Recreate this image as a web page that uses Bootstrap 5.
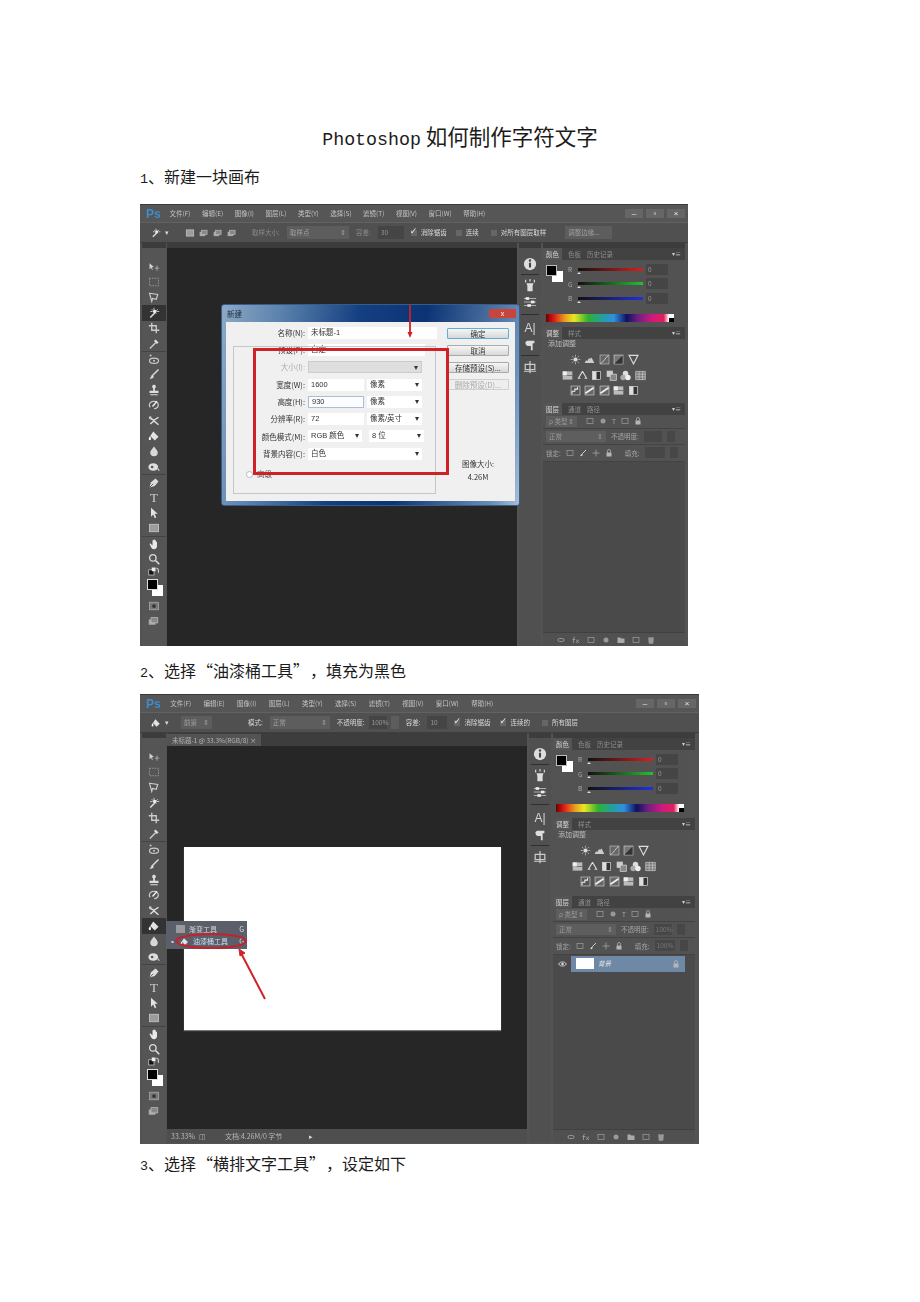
<!DOCTYPE html>
<html lang="zh-CN">
<head>
    <meta charset="UTF-8">
    <meta name="viewport" content="width=device-width, initial-scale=1">
    <title>Photoshop 如何制作字符文字</title>
    <link href="https://cdn.jsdelivr.net/npm/bootstrap@5.3.0/dist/css/bootstrap.min.css" rel="stylesheet">
    <style>
        body {
            background: #fff;
            color: #1c1c1c;
            font-family: "Noto Sans CJK SC", sans-serif;
            height: 1302px;
            overflow: hidden;
        }
        .doc-title { font-size: 21.5px; line-height: 30px; padding-top: 121px; margin: 0 0 9px; font-weight: 400; }
        .doc-title .lat { font-family: "Liberation Mono", monospace; font-size: 18.3px; }
        .step { font-size: 16px; line-height: 24px; padding-left: 140px; margin: 0; }
        .step .lat { font-family: "Liberation Mono", monospace; font-size: 13.4px; }
        .q-o, .q-c { display: inline-block; width: 1.06em; }
        .q-o { text-align: right; }
        .shot-wrap { padding-left: 140px; }
        .gap-a { margin-bottom: 12px; }
        .gap-b { margin-bottom: 8px; }
        .gap-c { margin-bottom: 12px; }
        .gap-d { margin-bottom: 7px; }

        /* Photoshop windows */
        .ps { background: #535353; color: #c4c4c4; font-size: 6.5px; line-height: 1; filter: blur(.55px); border-top: 1px solid #3a3a3a; white-space: nowrap; }
        .win-a { width: 548px; height: 442px; }
        .win-b { width: 559px; height: 450px; }
        .ps svg { display: block; flex: none; }
        .ps-menu { height: 17px; background: #565656; padding-left: 6px; gap: 11.5px; }
        .win-b .ps-menu { gap: 12.3px; }
        .ps-logo { font-size: 12px; font-weight: 700; color: #3d8ccb; width: 14px; margin-right: -2px; font-family: "Liberation Sans", sans-serif; }
        .ps-ctl { gap: 3px; margin-right: 3px; }
        .ps-ctl span { width: 18px; height: 9px; background: #666; color: #eee; font-size: 8px; line-height: 9px; text-align: center; font-family: "Liberation Sans", sans-serif; }
        .ps-opts { height: 21px; background: #505050; border-top: 1px solid #626262; border-bottom: 1px solid #3e3e3e; }
        .ps-body { height: 404px; padding: 0 3px 1px 2px; }
        .win-b .ps-body { height: 411px; padding-right: 4px; }

        .ps-tools { width: 24px; flex: none; margin-right: 1px; background: #555; padding-top: 11px; border-top: 5px solid #3c3c3c; }
        .tool { height: 15.4px; }
        .tool svg { width: 12px; height: 12px; }
        .tool.on { background: #333; }
        .tool.t-sep { border-top: 1px solid #444; }
        .tool.t-mini { height: 11px; }
        .tool.t-gap { margin-top: 2px; }
        .tool-t { font-family: "Liberation Serif", serif; font-size: 13px; color: #d0d0d0; }
        .chips { height: 18px; position: relative; }
        .chip-fg, .chip-bg { position: absolute; width: 11px; height: 11px; }
        .chip-fg { left: 5px; top: 1px; background: #000; border: 1px solid #ddd; z-index: 1; }
        .chip-bg { left: 10px; top: 7px; background: #fff; }

        .ps-canvas { background: #262626; position: relative; border-top: 5px solid #3c3c3c; }
        .win-b .ps-canvas { border-top-width: 1px; }
        .ps-gutter { width: 2px; }
        .ps-dock { width: 22px; flex: none; background: #505050; border-top: 5px solid #3c3c3c; padding-top: 7px; }
        .ps-dock hr { border-color: #2f2f2f; opacity: 1; }
        .hr-a { margin: 1.5px 2px; }
        .hr-b { margin: 4px 2px; }
        .hr-c { margin: 2px 2px; }
        .dock-i { height: 17px; }
        .dock-i svg { width: 14px; height: 14px; }
        .dock-a { font-family: "Liberation Sans", sans-serif; font-size: 12px; color: #d4d4d4; }

        .ps-panels { width: 142px; flex: none; margin-left: 2px; background: #525252; border-top: 5px solid #3c3c3c; }
        .p-tabs { height: 12px; background: #424242; gap: 6px; color: #8d8d8d; padding-right: 4px; }
        .p-tabs b { font-weight: 400; background: #555; color: #d6d6d6; padding: 3px 3px; height: 12px; }
        .p-menu { color: #ccc; font-size: 6px; }
        .p-color { height: 67px; padding: 2px 5px 0 2px; position: relative; }
        .win-b .p-color { height: 68px; }
        .swatch { position: absolute; left: 3px; top: 5px; width: 17px; height: 17px; }
        .swatch i { position: absolute; display: block; width: 11px; height: 11px; }
        .swatch .fg { left: 0; top: 0; background: #000; border: 1px solid #bbb; z-index: 1; }
        .swatch .bg { left: 6px; top: 6px; background: #fff; }
        .slider-row { height: 14.5px; padding-left: 23px; gap: 3px; }
        .slider-row > span { width: 7px; color: #aaa; }
        .slider { width: 65px; height: 3px; position: relative; }
        .slider::after { content: ""; position: absolute; left: -1px; top: 4px; border: 2px solid transparent; border-bottom-color: #ddd; border-top: 0; }
        .s-r { background: linear-gradient(90deg, #111, #d82020); }
        .s-g { background: linear-gradient(90deg, #111, #22c030); }
        .s-b { background: linear-gradient(90deg, #111, #2030e0); }
        .val { width: 22px; height: 11px; background: #454545; color: #999; padding: 2px; line-height: 7px; }
        .ramp { height: 8px; width: 128px; margin: 8px 0 0 1px; background: linear-gradient(90deg, #6b0000, #d81818 6%, #e8a020 15%, #e8e820 22%, #30b030 33%, #20a0a0 44%, #3090e0 53%, #101060 63%, #702080 72%, #d01880 83%, #e02060 92%, #fff 96%, #fff); position: relative; }
        .ramp::after { content: ""; position: absolute; right: 0; bottom: 0; width: 5px; height: 4px; background: #000; }
        .p-adj { height: 64px; padding: 0 0 0 3px; }
        .win-b .p-adj { height: 66px; }
        .p-adj .adj-t { color: #bdbdbd; padding: 1px 2px; margin-bottom: 4px; font-size: 7px; }
        .adj-row { height: 15.5px; gap: 3.5px; padding-right: 23px; }
        .adj-row svg { width: 11px; height: 11px; }
        .lay-row { height: 16.5px; padding: 0 3px; gap: 5px; border-bottom: 1px solid #434343; color: #a5a5a5; }
        .lay-row.first { height: 13.5px; }
        .lay-row svg { width: 8px; height: 8px; }
        .pick { background: #5e5e5e; height: 11px; padding: 2px 3px; line-height: 7px; display: flex; justify-content: space-between; color: #999; }
        .box { background: #474747; height: 11px; color: #777; line-height: 7px; padding: 2px; }
        .lay-list { background: #4a4a4a; position: relative; padding: 1px 10px 0 0; }
        .layer { height: 16px; padding: 0 5px; background: #6e88a5; color: #e8e8e8; margin-left: 18px; gap: 4px; font-style: italic; }
        .layer-wrap { position: relative; }
        .eye { position: absolute; left: 5px; top: 4px; width: 9px; height: 8px; }
        .thumb { width: 18px; height: 11px; background: #fff; }
        .lay-foot { height: 14px; gap: 7px; padding-right: 30px; background: #505050; border-top: 1px solid #404040; }
        .lay-foot svg { width: 8px; height: 8px; }

        .o-main { color: #d8d8d8; }
        .o-muted { color: #8b8b8b; }
        .o-field { background: #5d5d5d; height: 13px; line-height: 9px; padding: 2px 3px; color: #a0a0a0; display: flex; justify-content: space-between; }
        .o-dark { background: #454545; height: 13px; line-height: 9px; padding: 2px 3px; color: #999; }
        .check { width: 6px; height: 6px; background: #666; position: relative; flex: none; }
        .check.yes::after { content: "✓"; position: absolute; left: -1px; top: -3px; font-size: 9px; color: #eee; font-family: "DejaVu Sans", sans-serif; }
        .w-8 { width: 8px; } .w-18 { width: 18px; } .w-20 { width: 20px; } .w-26 { width: 26px; } .w-31 { width: 31px; }
        .w-47 { width: 47px; } .w-60 { width: 60px; } .w-62 { width: 62px; }
        .ml-0 { margin-left: 11px; } .ml-1 { margin-left: 4px; } .ml-2 { margin-left: 7px; } .ml-3 { margin-left: 12px; } .ml-4 { margin-left: 19px; } .ml-5 { margin-left: 27px; }
        .ml-6 { margin-left: 36px; } .ml-7 { margin-left: 10px; } .ml-8 { margin-left: 16px; } .ml-9 { margin-left: 15px; } .ml-10 { margin-left: 9px; }
        .o-ic { width: 10px; height: 10px; }

        /* dialog in first window */
        .dlg { position: absolute; left: 54px; top: 56px; width: 299px; height: 202px; background: linear-gradient(100deg, #8da9c6 0, #5b82ad 18%, #143f80 42%, #0c3474 62%, #6b8fb6 92%, #a8bed4); border: 1px solid #355d8c; border-radius: 3px; color: #333; font-size: 7.5px; }
        .dlg-title { height: 17px; padding: 0 3px 0 5px; color: #1d2a3a; }
        .dlg-x { width: 27px; height: 9px; background: #c9443c; color: #fff; text-align: center; line-height: 9px; font-size: 7px; font-family: "Liberation Sans", sans-serif; }
        .dlg-body { margin: 0 4px; height: 179px; background: #f0f0f0; padding-top: 2px; gap: 13px; position: relative; }
        .dlg-form { width: 208px; }
        .dlg-row { height: 17.3px; gap: 3px; }
        .dlg-row > label { width: 79px; text-align: right; flex: none; }
        .fld { height: 12px; background: #fff; padding: 0 3px; line-height: 12px; display: flex; justify-content: space-between; flex: none; font-family: "Liberation Sans", "Noto Sans CJK SC", sans-serif; }
        .fld.off { background: #dedede; border: 1px solid #ccc; }
        .fld.cur { border: 1px solid #a9bfd8; background: #fbfdff; line-height: 10px; }
        .f-129 { width: 129px; } .f-117 { width: 117px; } .f-114 { width: 114px; } .f-56 { width: 56px; } .f-55 { width: 55px; }
        .f-54 { width: 54px; }
        .muted-l { color: #aaa; }
        .dlg-more { margin: 8px 0 0 20px; gap: 4px; color: #555; }
        .dlg-more i { width: 7px; height: 7px; border-radius: 50%; background: #fff; border: 1px solid #bbb; display: block; }
        .dlg-side { padding-top: 4px; width: 62px; }
        .dlg-btn { height: 11px; line-height: 10px; margin-bottom: 6px; background: linear-gradient(#f6f6f6, #d8d8d8); border: 1px solid #aaa; border-radius: 1px; text-align: center; }
        .dlg-btn.def { border-color: #5fb0d8; }
        .dlg-btn.off { color: #aaa; border-color: #d0d0d0; background: #eee; }
        .dlg-size { margin-top: 67px; line-height: 13px; text-align: center; }
        .dlg-group { position: absolute; left: 7px; top: 24px; width: 203px; height: 148px; border: 1px solid #c6c6c6; pointer-events: none; }
        .red-box { position: absolute; left: 31px; top: 43px; width: 196px; height: 127px; border: 3px solid #cf2127; }
        .red-line { position: absolute; left: 183px; top: 0; width: 10px; height: 34px; }

        /* second window canvas */
        .ps-tabbar { height: 12px; background: #3d3d3d; }
        .ps-tab { background: #535353; height: 12px; padding: 3px 5px; color: #b5b5b5; }
        .ps-paper { width: 317px; height: 183px; background: #fff; margin: 101px 0 0 17px; box-shadow: 0 1px 1px #777; }
        .ps-status { height: 14px; background: #4e4e4e; padding: 0 4px; color: #b8b8b8; font-size: 7px; position: absolute; left: 0; right: 0; bottom: 0; }
        .flyout { position: absolute; left: -1px; top: 187px; width: 81px; height: 28px; background: #5a5f6a; color: #dcdcdc; padding: 2px 3px; z-index: 2; font-size: 7px; }
        .fly-row { height: 12px; gap: 4px; }
        .fly-row.on { color: #cfe0f2; }
        .fly-row svg { width: 9px; height: 9px; }
        .fly-ic { width: 9px; height: 8px; background: #9a9a9a; }
        .fly-mark { position: absolute; left: 0; top: 0; width: 110px; height: 82px; z-index: 3; }
    </style>
</head>
<body>
<svg class="d-none" xmlns="http://www.w3.org/2000/svg">
    <symbol id="t-move" viewBox="0 0 16 16"><path d="M2 3l6 5-3 .4 1.4 3-1 .5L4 9l-2 2z" fill="#d0d0d0"/><path d="M12 6v7M9 9.5h6" stroke="#bbb" fill="none"/></symbol>
    <symbol id="t-marq" viewBox="0 0 16 16"><rect x="2" y="3" width="12" height="10" fill="none" stroke="#aaa" stroke-dasharray="2 1.5"/></symbol>
    <symbol id="t-lasso" viewBox="0 0 16 16"><path d="M2 3l11 1.500-2 6.500-5-1-1 4z" fill="none" stroke="#ccc" stroke-width="1.500"/></symbol>
    <symbol id="t-wand" viewBox="0 0 16 16"><path d="M9 8l-6 6" stroke="#ddd" stroke-width="2.200"/><path d="M8 1v3M3 6h3M12 6h3M5 3l2 2M13 3l-2 2M11 9l-1-1" stroke="#eee"/><circle cx="9" cy="6" r="2.400" fill="#eee"/></symbol>
    <symbol id="t-crop" viewBox="0 0 16 16"><path d="M5 1v10h10M1 5h10v10" fill="none" stroke="#ccc" stroke-width="1.800"/></symbol>
    <symbol id="t-drop" viewBox="0 0 16 16"><path d="M2.500 14l8-8" stroke="#ccc" stroke-width="2"/><path d="M9 3l4 4" stroke="#ddd" stroke-width="3"/></symbol>
    <symbol id="t-heal" viewBox="0 0 16 16"><ellipse cx="8" cy="9" rx="6" ry="3.500" fill="none" stroke="#ccc" stroke-width="1.500"/><circle cx="8" cy="9" r="1.300" fill="#ccc"/><path d="M2 2h3M3.500 .5v3" stroke="#ccc"/></symbol>
    <symbol id="t-brush" viewBox="0 0 16 16"><path d="M14 2L7 9l-2 2" stroke="#ddd" stroke-width="1.800" fill="none"/><path d="M6 10c-2 0-2 3-4 4 3 1 6-1 5.500-3z" fill="#ddd"/></symbol>
    <symbol id="t-stamp" viewBox="0 0 16 16"><path d="M8 1a2.500 2.500 0 0 1 1.200 4.700V9H14v3H2V9h4.800V5.700A2.500 2.500 0 0 1 8 1zM3 13.500h10V15H3z" fill="#ddd"/></symbol>
    <symbol id="t-hist" viewBox="0 0 16 16"><path d="M3 11a6 5 0 1 1 5 2" fill="none" stroke="#ccc" stroke-width="1.600"/><path d="M12 3L6 10" stroke="#eee" stroke-width="1.800"/></symbol>
    <symbol id="t-erase" viewBox="0 0 16 16"><path d="M2 4l6 3 6-4M3 12l5-4 6 5" fill="none" stroke="#ddd" stroke-width="2"/><circle cx="3" cy="3.500" r="1.800" fill="#ccc"/></symbol>
    <symbol id="t-bucket" viewBox="0 0 16 16"><path d="M7 2l7 7-5 5-6-6z" fill="#e2e2e2"/><path d="M3 8c-1.500 2-2 3-2 4a1.500 1.500 0 0 0 3 0c0-1-.5-2-1-4z" fill="#fff"/></symbol>
    <symbol id="t-blur" viewBox="0 0 16 16"><path d="M8 2c3 4 5 6 5 8a5 5 0 0 1-10 0c0-2 2-4 5-8z" fill="#d8d8d8"/></symbol>
    <symbol id="t-dodge" viewBox="0 0 16 16"><ellipse cx="7" cy="8" rx="6.500" ry="5" fill="#ddd"/><circle cx="5.500" cy="8" r="1.800" fill="#555"/><path d="M13 10l2 3" stroke="#ddd" stroke-width="1.500"/></symbol>
    <symbol id="t-pen" viewBox="0 0 16 16"><path d="M2 14l2-7 6-5 4 4-5 6z" fill="#ddd"/><path d="M2 14l5-5" stroke="#444"/></symbol>
    <symbol id="t-path" viewBox="0 0 16 16"><path d="M4 1v12l3-3 2 5 2-1-2-5h4z" fill="#e2e2e2"/></symbol>
    <symbol id="t-rect" viewBox="0 0 16 16"><rect x="2" y="3" width="12" height="10" fill="#9c9c9c" stroke="#ccc"/></symbol>
    <symbol id="t-hand" viewBox="0 0 16 16"><path d="M3 7l3 3V3h1.500v4V2H9v5V3h1.500v5V5H12v6c0 2-1.500 4-4 4-2 0-3-1-4-3L2 8z" fill="#e8e8e8"/></symbol>
    <symbol id="t-zoom" viewBox="0 0 16 16"><circle cx="6.500" cy="6.500" r="4.300" fill="none" stroke="#ddd" stroke-width="1.800"/><path d="M10 10l5 5" stroke="#ddd" stroke-width="2.200"/></symbol>
    <symbol id="t-mini" viewBox="0 0 16 16"><rect x="1" y="5" width="7" height="7" fill="#111" stroke="#ccc"/><rect x="5" y="2" width="5" height="5" fill="#eee"/><path d="M11 3c3 0 3 2 3 6" fill="none" stroke="#ccc" stroke-width="1.500"/></symbol>
    <symbol id="t-mask" viewBox="0 0 16 16"><rect x="2" y="3" width="12" height="10" fill="#777" stroke="#aaa"/><circle cx="8" cy="8" r="2.500" fill="#333"/></symbol>
    <symbol id="t-screen" viewBox="0 0 16 16"><rect x="1" y="6" width="9" height="7" fill="#aaa"/><rect x="4" y="3.500" width="9" height="7" fill="#888" stroke="#bbb"/></symbol>
    <symbol id="d-info" viewBox="0 0 16 16"><circle cx="8" cy="8" r="7" fill="#ddd"/><path d="M8 6.500V12" stroke="#444" stroke-width="2.400"/><circle cx="8" cy="4" r="1.400" fill="#444"/></symbol>
    <symbol id="d-puppet" viewBox="0 0 16 16"><path d="M3 2v3M8 1v3M13 2v3" stroke="#ccc" stroke-width="1.500"/><path d="M4 6h8l-1 3v6H5V9z" fill="#ddd"/></symbol>
    <symbol id="d-sliders" viewBox="0 0 16 16"><path d="M1 4h14M1 8h14M1 12h14" stroke="#bbb"/><rect x="3" y="2.500" width="4" height="3" fill="#eee"/><rect x="9" y="6.500" width="4" height="3" fill="#eee"/><rect x="5" y="10.500" width="4" height="3" fill="#eee"/></symbol>
    <symbol id="d-para" viewBox="0 0 16 16"><path d="M5 3h8v3h-2v8H9V9H7a3 3 0 0 1-2-6z" fill="#ddd"/></symbol>
    <symbol id="d-align" viewBox="0 0 16 16"><path d="M8 1v14" stroke="#ccc" stroke-width="1.400"/><path d="M1 13h14" stroke="#ccc"/><rect x="2.500" y="5" width="11" height="6" fill="none" stroke="#ccc" stroke-width="1.400"/></symbol>
    <symbol id="a-sun" viewBox="0 0 16 16"><circle cx="8" cy="8" r="3" fill="#ddd"/><path d="M8 1v3M8 12v3M1 8h3M12 8h3M3 3l2 2M11 11l2 2M13 3l-2 2M5 11l-2 2" stroke="#ccc"/></symbol>
    <symbol id="a-hist" viewBox="0 0 16 16"><path d="M1 13l2-4 2 1 2-4 2 1 2-2 2 4 2 4z" fill="#ccc"/></symbol>
    <symbol id="a-curve" viewBox="0 0 16 16"><rect x="1.500" y="1.500" width="13" height="13" fill="#666" stroke="#bbb"/><path d="M2 14C7 12 9 5 14 2" stroke="#eee" fill="none"/></symbol>
    <symbol id="a-exp" viewBox="0 0 16 16"><rect x="1.500" y="1.500" width="13" height="13" fill="#777" stroke="#ccc"/><path d="M2 14L14 2v12z" fill="#333"/></symbol>
    <symbol id="a-tri" viewBox="0 0 16 16"><path d="M1.500 2h13L8 14.500z" fill="none" stroke="#ddd" stroke-width="1.600"/></symbol>
    <symbol id="a-hue" viewBox="0 0 16 16"><rect x="1" y="2" width="14" height="12" fill="#bbb"/><path d="M1 8h14" stroke="#555"/><rect x="1" y="2" width="6" height="6" fill="#eee"/></symbol>
    <symbol id="a-bal" viewBox="0 0 16 16"><path d="M8 2L2 12h3M8 2l6 10h-3" fill="none" stroke="#ddd" stroke-width="1.500"/></symbol>
    <symbol id="a-half" viewBox="0 0 16 16"><rect x="2" y="2" width="12" height="12" fill="#333" stroke="#ddd"/><rect x="2" y="2" width="6" height="12" fill="#ddd"/></symbol>
    <symbol id="a-photo" viewBox="0 0 16 16"><rect x="1" y="1" width="9" height="9" fill="#ccc"/><rect x="6" y="6" width="9" height="9" fill="#888" stroke="#ddd"/></symbol>
    <symbol id="a-mix" viewBox="0 0 16 16"><circle cx="8" cy="5" r="4" fill="#ddd"/><circle cx="4.500" cy="11" r="4" fill="#aaa"/><circle cx="11.500" cy="11" r="4" fill="#eee"/></symbol>
    <symbol id="a-grid" viewBox="0 0 16 16"><path d="M1 2h14v12H1zM6 2v12M11 2v12M1 6h14M1 10h14" fill="#777" stroke="#ccc"/></symbol>
    <symbol id="a-post" viewBox="0 0 16 16"><rect x="1.500" y="1.500" width="13" height="13" fill="#555" stroke="#ccc"/><path d="M3 13V9h4V6h4V3" fill="none" stroke="#eee" stroke-width="1.500"/></symbol>
    <symbol id="a-diag" viewBox="0 0 16 16"><rect x="1.500" y="1.500" width="13" height="13" fill="#666" stroke="#ccc"/><path d="M2 12L14 4" stroke="#eee" stroke-width="2.500"/></symbol>
    <symbol id="l-img" viewBox="0 0 16 16"><rect x="2" y="3" width="12" height="10" fill="none" stroke="#999" stroke-width="1.500"/></symbol>
    <symbol id="l-dot" viewBox="0 0 16 16"><circle cx="8" cy="8" r="5" fill="#999"/></symbol>
    <symbol id="l-lock" viewBox="0 0 16 16"><rect x="3" y="7" width="10" height="8" fill="#b5b5b5"/><path d="M5 7V4a3 3 0 0 1 6 0v3" fill="none" stroke="#b5b5b5" stroke-width="1.500"/></symbol>
    <symbol id="l-cross" viewBox="0 0 16 16"><path d="M8 1v14M1 8h14" stroke="#aaa" stroke-width="1.500"/></symbol>
    <symbol id="l-link" viewBox="0 0 16 16"><path d="M2 8a3 3 0 0 1 3-3h6a3 3 0 0 1 0 6H5a3 3 0 0 1-3-3z" fill="none" stroke="#aaa" stroke-width="1.500"/></symbol>
    <symbol id="l-fold" viewBox="0 0 16 16"><path d="M1 3h6l1 2h7v9H1z" fill="#aaa"/></symbol>
    <symbol id="l-bin" viewBox="0 0 16 16"><path d="M3 4h10l-1 11H4zM2 3h12" fill="#999" stroke="#999"/></symbol>
    <symbol id="l-fx" viewBox="0 0 16 16"><path d="M3 14V5a2 2 0 0 1 3-2M1 7h5M8 7l6 7M14 7l-6 7" fill="none" stroke="#aaa" stroke-width="1.500"/></symbol>
</svg>

<!-- shared parts of both Photoshop windows -->
<template id="tpl-menu">
    <span class="ps-logo">Ps</span>
    <span>文件(F)</span><span>编辑(E)</span><span>图像(I)</span><span>图层(L)</span><span>类型(Y)</span><span>选择(S)</span><span>滤镜(T)</span><span>视图(V)</span><span>窗口(W)</span><span>帮助(H)</span>
    <div class="ps-ctl d-flex ms-auto"><span>–</span><span>▫</span><span>×</span></div>
</template>
<template id="tpl-dock">
    <div class="dock-i d-flex justify-content-center align-items-center"><svg><use href="#d-info"/></svg></div>
    <hr class="hr-a">
    <div class="dock-i d-flex justify-content-center align-items-center"><svg><use href="#d-puppet"/></svg></div>
    <div class="dock-i d-flex justify-content-center align-items-center"><svg><use href="#d-sliders"/></svg></div>
    <hr class="hr-b">
    <div class="dock-i dock-a d-flex justify-content-center align-items-center">A|</div>
    <div class="dock-i d-flex justify-content-center align-items-center"><svg><use href="#d-para"/></svg></div>
    <hr class="hr-c">
    <div class="dock-i d-flex justify-content-center align-items-center"><svg><use href="#d-align"/></svg></div>
</template>
<template id="tpl-panels">
    <div class="p-tabs d-flex align-items-center"><b>颜色</b><span>色板</span><span>历史记录</span><span class="ms-auto p-menu">▾≡</span></div>
    <div class="p-color">
        <div class="swatch"><i class="fg"></i><i class="bg"></i></div>
        <div class="slider-row d-flex align-items-center"><span>R</span><div class="slider s-r"></div><div class="val">0</div></div>
        <div class="slider-row d-flex align-items-center"><span>G</span><div class="slider s-g"></div><div class="val">0</div></div>
        <div class="slider-row d-flex align-items-center"><span>B</span><div class="slider s-b"></div><div class="val">0</div></div>
        <div class="ramp"></div>
    </div>
    <div class="p-tabs d-flex align-items-center"><b>调整</b><span>样式</span><span class="ms-auto p-menu">▾≡</span></div>
    <div class="p-adj">
        <div class="adj-t">添加调整</div>
        <div class="adj-row d-flex justify-content-center align-items-center"><svg><use href="#a-sun"/></svg><svg><use href="#a-hist"/></svg><svg><use href="#a-curve"/></svg><svg><use href="#a-exp"/></svg><svg><use href="#a-tri"/></svg></div>
        <div class="adj-row d-flex justify-content-center align-items-center"><svg><use href="#a-hue"/></svg><svg><use href="#a-bal"/></svg><svg><use href="#a-half"/></svg><svg><use href="#a-photo"/></svg><svg><use href="#a-mix"/></svg><svg><use href="#a-grid"/></svg></div>
        <div class="adj-row d-flex justify-content-center align-items-center"><svg><use href="#a-post"/></svg><svg><use href="#a-diag"/></svg><svg><use href="#a-diag"/></svg><svg><use href="#a-hue"/></svg><svg><use href="#a-half"/></svg></div>
    </div>
    <div class="p-tabs d-flex align-items-center"><b>图层</b><span>通道</span><span>路径</span><span class="ms-auto p-menu">▾≡</span></div>
    <div class="lay-row first d-flex align-items-center"><span class="pick w-31"><span>ρ 类型</span><span>⇕</span></span><svg class="ml-1"><use href="#l-img"/></svg><svg><use href="#l-dot"/></svg><span>T</span><svg><use href="#l-img"/></svg><svg><use href="#l-lock"/></svg></div>
    <div class="lay-row d-flex align-items-center"><span class="pick w-60"><span>正常</span><span>⇕</span></span><span>不透明度:</span><span class="box w-18 pct"></span><span class="box w-8"></span></div>
    <div class="lay-row d-flex align-items-center"><span>锁定:</span><svg><use href="#l-img"/></svg><svg><use href="#t-brush"/></svg><svg><use href="#l-cross"/></svg><svg><use href="#l-lock"/></svg><span class="ml-2">填充:</span><span class="box w-20 pct"></span><span class="box w-8"></span></div>
    <div class="lay-list flex-grow-1"></div>
    <div class="lay-foot d-flex align-items-center justify-content-end"><svg><use href="#l-link"/></svg><svg><use href="#l-fx"/></svg><svg><use href="#l-img"/></svg><svg><use href="#l-dot"/></svg><svg><use href="#l-fold"/></svg><svg><use href="#l-img"/></svg><svg><use href="#l-bin"/></svg></div>
</template>

<h1 class="doc-title text-center"><span class="lat">Photoshop</span> 如何制作字符文字</h1>
<p class="step gap-a"><span class="lat">1</span>、新建一块画布</p>

<div class="shot-wrap gap-c">
<div class="ps win-a">
    <div class="ps-menu d-flex align-items-center"></div>
    <div class="ps-opts d-flex align-items-center">
        <svg class="o-ic ml-0"><use href="#t-wand"/></svg>
        <span class="ml-1 o-main">▾</span>
        <svg class="o-ic ml-8"><use href="#t-rect"/></svg>
        <svg class="o-ic ml-1"><use href="#t-screen"/></svg>
        <svg class="o-ic ml-1"><use href="#t-screen"/></svg>
        <svg class="o-ic ml-1"><use href="#t-screen"/></svg>
        <span class="ml-9 o-muted w-31">取样大小:</span>
        <span class="o-field w-62 ml-1"><span>取样点</span><span>⇕</span></span>
        <span class="ml-2 o-muted">容差:</span>
        <span class="o-dark w-26 ml-2">30</span>
        <span class="check yes ml-2"></span><span class="ml-1 o-main">消除锯齿</span>
        <span class="check ml-10"></span><span class="ml-1 o-main">连续</span>
        <span class="check ml-3"></span><span class="ml-1 o-main">对所有图层取样</span>
        <span class="o-field w-47 ml-4"><span>调整边缘...</span></span>
    </div>
    <div class="ps-body d-flex">
        <div class="ps-tools" data-on="wand"></div>
        <div class="ps-canvas flex-grow-1">
            <div class="dlg">
                <div class="dlg-title d-flex align-items-center justify-content-between"><span>新建</span><span class="dlg-x">x</span></div>
                <div class="dlg-body d-flex">
                    <div class="dlg-form">
                        <div class="dlg-row d-flex align-items-center"><label>名称(N):</label><span class="fld f-129">未标题-1</span></div>
                        <div class="dlg-row d-flex align-items-center"><label>预设(P):</label><span class="fld f-117">自定</span></div>
                        <div class="dlg-row d-flex align-items-center"><label class="muted-l">大小(I):</label><span class="fld off f-114"><span></span><span>▾</span></span></div>
                        <div class="dlg-row d-flex align-items-center"><label>宽度(W):</label><span class="fld f-56">1600</span><span class="fld f-55"><span>像素</span><span>▾</span></span></div>
                        <div class="dlg-row d-flex align-items-center"><label>高度(H):</label><span class="fld cur f-56">930</span><span class="fld f-55"><span>像素</span><span>▾</span></span></div>
                        <div class="dlg-row d-flex align-items-center"><label>分辨率(R):</label><span class="fld f-56">72</span><span class="fld f-55"><span>像素/英寸</span><span>▾</span></span></div>
                        <div class="dlg-row d-flex align-items-center"><label>颜色模式(M):</label><span class="fld f-54"><span>RGB 颜色</span><span>▾</span></span><span class="fld f-55 ms-1"><span>8 位</span><span>▾</span></span></div>
                        <div class="dlg-row d-flex align-items-center"><label>背景内容(C):</label><span class="fld f-114"><span>白色</span><span>▾</span></span></div>
                        <div class="dlg-more d-flex align-items-center"><i></i><span>高级</span></div>
                    </div>
                    <div class="dlg-side">
                        <div class="dlg-btn def">确定</div>
                        <div class="dlg-btn">取消</div>
                        <div class="dlg-btn">存储预设(S)...</div>
                        <div class="dlg-btn off">删除预设(D)...</div>
                        <div class="dlg-size">图像大小:<br>4.26M</div>
                    </div>
                    <div class="dlg-group"></div>
                </div>
                <div class="red-box"></div>
                <svg class="red-line" viewBox="0 0 10 34"><path d="M5 0v30" stroke="#cf2127" stroke-width="1.800"/><path d="M2.500 27h5L5 33z" fill="#cf2127"/></svg>
            </div>
        </div>
        <div class="ps-gutter"></div>
        <div class="ps-dock"></div>
        <div class="ps-panels d-flex flex-column"></div>
    </div>
</div>
</div>

<p class="step gap-b"><span class="lat">2</span>、选择<span class="q-o">“</span>油漆桶工具<span class="q-c">”</span>，填充为黑色</p>

<div class="shot-wrap gap-d">
<div class="ps win-b">
    <div class="ps-menu d-flex align-items-center"></div>
    <div class="ps-opts d-flex align-items-center">
        <svg class="o-ic ml-0"><use href="#t-bucket"/></svg>
        <span class="ml-1 o-main">▾</span>
        <span class="o-field w-31 ml-3"><span>前景</span><span>⇕</span></span>
        <span class="ml-6 o-main">模式:</span>
        <span class="o-field w-60 ml-2"><span>正常</span><span>⇕</span></span>
        <span class="ml-2 o-main">不透明度:</span>
        <span class="o-dark ml-1 w-18">100%</span>
        <span class="o-field w-8 ml-1"></span>
        <span class="ml-2 o-main">容差:</span>
        <span class="o-dark ml-2 w-20">10</span>
        <span class="check yes ml-2"></span><span class="ml-1 o-main">消除锯齿</span>
        <span class="check yes ml-7"></span><span class="ml-1 o-main">连续的</span>
        <span class="check ml-3"></span><span class="ml-1 o-main">所有图层</span>
    </div>
    <div class="ps-body d-flex">
        <div class="ps-tools" data-on="bucket"></div>
        <div class="ps-canvas flex-grow-1">
            <div class="ps-tabbar d-flex"><span class="ps-tab">未标题-1 @ 33.3%(RGB/8) ×</span></div>
            <div class="ps-paper"></div>
            <div class="flyout">
                <div class="fly-row d-flex align-items-center"><span class="fly-ic ml-2"></span><span>渐变工具</span><span class="ms-auto">G</span></div>
                <div class="fly-row on d-flex align-items-center"><span>▪</span><svg><use href="#t-bucket"/></svg><span>油漆桶工具</span><span class="ms-auto">G</span></div>
                <svg class="fly-mark" viewBox="0 0 110 82"><ellipse cx="45" cy="20" rx="35" ry="7" fill="none" stroke="#c8202a" stroke-width="2"/><path d="M99 78L76 34" stroke="#d02028" stroke-width="2"/><path d="M73 28l6 4-5 3z" fill="#d02028" stroke="#d02028"/></svg>
            </div>
            <div class="ps-status d-flex align-items-center"><span>33.33%</span><span class="ml-1">◫</span><span class="ml-4">文档:4.26M/0 字节</span><span class="ml-5 o-main">▸</span></div>
        </div>
        <div class="ps-gutter"></div>
        <div class="ps-dock"></div>
        <div class="ps-panels d-flex flex-column"></div>
    </div>
</div>
</div>

<p class="step"><span class="lat">3</span>、选择<span class="q-o">“</span>横排文字工具<span class="q-c">”</span>，设定如下</p>

<script>
    const toolList = ["move", "marq", "lasso", "wand", "crop", "drop", "heal|t-sep", "brush", "stamp", "hist", "erase", "bucket", "blur", "dodge",
        "pen|t-sep", "T", "path", "rect", "hand|t-sep", "zoom", "mini|t-mini", "chips", "mask|t-gap", "screen"];
    const fill = (sel, id) => document.querySelectorAll(sel).forEach(el => el.append(document.getElementById(id).content.cloneNode(true)));

    fill(".ps-menu", "tpl-menu");
    fill(".ps-dock", "tpl-dock");
    fill(".ps-panels", "tpl-panels");

    document.querySelectorAll(".ps-tools").forEach(bar => {
        bar.innerHTML = toolList.map(item => {
            const [name, extra = ""] = item.split("|");
            if (name === "chips") return `<div class="chips"><span class="chip-fg"></span><span class="chip-bg"></span></div>`;
            const on = name === bar.dataset.on ? "on" : "";
            const inner = name === "T" ? `<span class="tool-t">T</span>` : `<svg><use href="#t-${name}"/></svg>`;
            return `<div class="tool ${extra} ${on} d-flex justify-content-center align-items-center">${inner}</div>`;
        }).join("");
    });

    // second window has a layer and filled percent boxes
    const second = document.querySelector(".win-b");
    second.querySelectorAll(".pct").forEach(el => el.textContent = "100%");
    second.querySelector(".lay-list").innerHTML = `
        <div class="layer-wrap">
            <svg class="eye" viewBox="0 0 16 12"><path d="M1 6c3-5 11-5 14 0-3 5-11 5-14 0z" fill="none" stroke="#ddd" stroke-width="1.500"/><circle cx="8" cy="6" r="2.200" fill="#ddd"/></svg>
            <div class="layer d-flex align-items-center"><span class="thumb"></span><span>背景</span><svg class="ms-auto w-8"><use href="#l-lock"/></svg></div>
        </div>`;
</script>
<script src="https://cdn.jsdelivr.net/npm/bootstrap@5.3.0/dist/js/bootstrap.bundle.min.js"></script>
</body>
</html>
